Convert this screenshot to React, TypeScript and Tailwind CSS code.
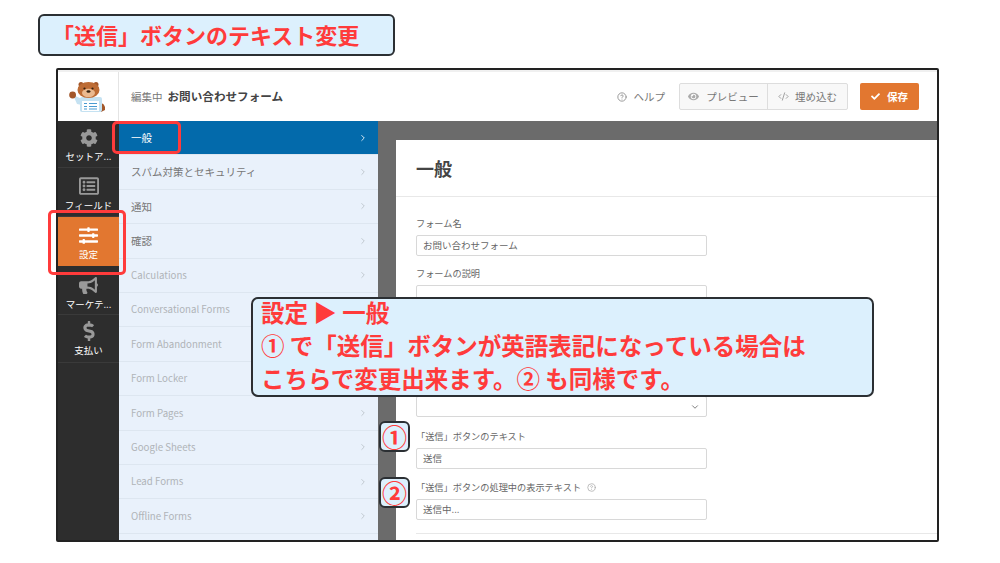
import { ChevronDown, ChevronRight, CircleHelp, CodeXml } from "lucide-react"
import { FaBullhorn, FaCheck, FaCog, FaDollarSign, FaEye, FaRegListAlt, FaSlidersH } from "react-icons/fa"
import type { ReactNode } from "react"

const font = "font-['Noto_Sans_CJK_JP','Noto_Sans',sans-serif]"

const navItems = [
  { label: "セットア...", icon: <FaCog className="size-[18px] text-[#999]" />, h: "h-[47px] pt-[3px]" },
  { label: "フィールド", icon: <FaRegListAlt className="size-[20px] text-[#999]" />, h: "h-[49px] pt-[3px]" },
  { label: "設定", icon: <FaSlidersH className="size-[19px] text-white" />, h: "h-[49px] pt-[3px]", active: true },
  { label: "マーケテ...", icon: <FaBullhorn className="size-[19px] text-[#999]" />, h: "h-[43px] mt-[6px]" },
  { label: "支払い", icon: <FaDollarSign className="size-[20px] text-[#999]" />, h: "h-[48px]" },
]

const subItems = [
  { label: "一般", active: true },
  { label: "スパム対策とセキュリティ", on: true },
  { label: "通知", on: true },
  { label: "確認", on: true },
  { label: "Calculations", latin: true },
  { label: "Conversational Forms", latin: true },
  { label: "Form Abandonment", latin: true },
  { label: "Form Locker", latin: true },
  { label: "Form Pages", latin: true },
  { label: "Google Sheets", latin: true },
  { label: "Lead Forms", latin: true },
  { label: "Offline Forms", latin: true },
]

const Bear = () => (
  <svg viewBox="0 0 38 30" className="h-[30px] w-[38px]">
    <circle cx="12" cy="2.5" r="2.5" fill="#a3572a" />
    <circle cx="27" cy="2.5" r="2.5" fill="#a3572a" />
    <path d="M29 20 q8 1 7 8 l-4 2 Z" fill="#a3572a" />
    <path d="M4 13 L13 17 L13 23 L8 22 Z" fill="#c5e2f2" />
    <rect x="11" y="15" width="22" height="15" rx="2" fill="#c5e2f2" />
    <ellipse cx="19.5" cy="8" rx="11" ry="8" fill="#bd6c35" />
    <ellipse cx="19.5" cy="11" rx="6.5" ry="4.2" fill="#eab98f" />
    <circle cx="15.5" cy="6.5" r="1.1" fill="#33200f" />
    <circle cx="23.5" cy="6.5" r="1.1" fill="#33200f" />
    <ellipse cx="19.5" cy="9.5" rx="2" ry="1.2" fill="#33200f" />
    <circle cx="3.6" cy="13" r="3.4" fill="#a3572a" />
    <rect x="13" y="19" width="17" height="10" fill="#fff" />
    <path d="M15 21.5h3M20 21.5h8M15 24.5h3M20 24.5h8M15 27h3M20 27h8" stroke="#4a9bd1" strokeWidth="1.2" />
  </svg>
)

const Field = ({ label, value, help }: { label: string; value: string; help?: boolean }) => (
  <div className="flex flex-col">
    <div className="flex h-[15px] items-center gap-[6px] text-[9.2px] leading-none text-[#666]">
      {label}
      {help && <CircleHelp className="size-[9px] text-[#aaa]" />}
    </div>
    <div className="mt-[4px] flex h-[21px] w-[291px] items-center rounded-[2px] border border-[#d8d8d8] bg-white px-[6px] text-[9.5px] text-[#666]">
      {value}
    </div>
  </div>
)

const Badge = ({ top, children }: { top: string; children: ReactNode }) => (
  <div className={`absolute left-[379px] ${top} flex h-[31px] w-[31px] items-center justify-center rounded-[6px] border-2 border-[#2b2f33] bg-[#dcf0fd] text-[25px] font-bold leading-none text-[#ff3b3b]`}>
    {children}
  </div>
)

export default function App() {
  return (
    <div className={`relative h-[563px] w-[1000px] overflow-hidden bg-white ${font}`}>
      <div className="ml-[38px] mt-[14px] flex h-[42px] w-[357px] items-center rounded-[6px] border-2 border-[#2b2f33] bg-[#dcf0fd] pb-[3px] pl-[12px] text-[22px] font-bold leading-none text-[#ff3b3b]">
        「送信」ボタンのテキスト変更
      </div>

      <div className="ml-[56px] mt-[12px] flex h-[474px] w-[883px] flex-col overflow-hidden rounded-[2px] border-2 border-[#222]">
        <header className="flex h-[51px] shrink-0 items-stretch border-t-2 border-[#f0f0f0] bg-white">
          <div className="flex w-[61px] shrink-0 items-center justify-center border-r border-[#e4e4e4]">
            <Bear />
          </div>
          <div className="flex flex-1 items-center pl-[12px] pr-[18px] text-[10.5px]">
            <span className="text-[#777]">編集中</span>
            <span className="ml-[5px] text-[11.6px] font-bold text-[#444]">お問い合わせフォーム</span>
            <div className="ml-auto flex items-center">
              <CircleHelp className="size-[10px] text-[#888]" />
              <span className="ml-[7px] text-[#777]">ヘルプ</span>
              <div className="ml-[14px] flex h-[27px] items-stretch rounded-[2px] border border-[#ddd] bg-[#f8f8f8] text-[#777]">
                <div className="flex w-[88px] items-center justify-center gap-[7px] border-r border-[#ddd]">
                  <FaEye className="size-[11px] text-[#aaa]" />
                  プレビュー
                </div>
                <div className="flex w-[79px] items-center justify-center gap-[6px]">
                  <CodeXml className="size-[11px] text-[#999]" />
                  埋め込む
                </div>
              </div>
              <div className="ml-[12px] flex h-[27px] w-[59px] items-center justify-center gap-[7px] rounded-[2px] bg-[#e27730] font-bold text-white">
                <FaCheck className="size-[9px]" />
                保存
              </div>
            </div>
          </div>
        </header>

        <div className="flex min-h-0 flex-1">
          <nav className="w-[61px] shrink-0 bg-[#2d2d2d]">
            {navItems.map((n) => (
              <div
                key={n.label}
                className={`flex ${n.h} flex-col items-center justify-center gap-[3px] border-b border-[#3a3a3a] ${n.active ? "border-b-0 bg-[#e27730]" : ""}`}
              >
                {n.icon}
                <span className="whitespace-nowrap text-[9.5px] leading-[13px] text-white">{n.label}</span>
              </div>
            ))}
          </nav>

          <div className="flex w-[259px] shrink-0 flex-col bg-[#e9f1fb]">
            {subItems.map((s) => (
              <div
                key={s.label}
                className={`flex h-[34.4px] shrink-0 items-center justify-between border-b border-[#dde6f0] pl-[12px] pr-[10px] ${s.latin ? "text-[9.7px]" : "text-[10.5px]"} ${
                  s.active ? "bg-[#036aab] text-white" : s.on ? "text-[#777]" : "text-[#b0b4b8]"
                }`}
              >
                {s.label}
                <ChevronRight className={`size-[10px] ${s.active ? "text-white" : "text-[#b8c0c8]"}`} />
              </div>
            ))}
          </div>

          <div className="min-w-0 flex-1 bg-[#6b6b6b] pl-[18px] pt-[19px]">
            <div className="h-full bg-white">
              <div className="flex h-[57px] items-center border-b border-[#e8e8e8] pl-[20px] text-[18px] font-bold text-[#444]">
                一般
              </div>
              <div className="flex flex-col pl-[20px] pt-[19px]">
                <Field label="フォーム名" value="お問い合わせフォーム" />
                <div className="mt-[10px]">
                  <Field label="フォームの説明" value="" />
                </div>
                <div className="mt-[90px] flex h-[21px] w-[291px] items-center justify-end rounded-[2px] border border-[#d8d8d8] pr-[6px]">
                  <ChevronDown className="size-[10px] text-[#666]" />
                </div>
                <div className="mt-[12px]">
                  <Field label="「送信」ボタンのテキスト" value="送信" />
                </div>
                <div className="mt-[11px]">
                  <Field label="「送信」ボタンの処理中の表示テキスト" value="送信中..." help />
                </div>
                <div className="mt-[13px] h-px bg-[#e8e8e8]" />
              </div>
            </div>
          </div>
        </div>
      </div>

      {/* 赤枠 */}
      <div className="absolute left-[48px] top-[210px] h-[65px] w-[78px] rounded-[5px] border-[3px] border-[#ff3b3b]" />
      <div className="absolute left-[112px] top-[121px] h-[33px] w-[69px] rounded-[5px] border-[3px] border-[#ff3b3b]" />

      {/* 説明 */}
      <div className="absolute left-[251px] top-[297px] flex h-[100px] w-[623px] flex-col justify-center rounded-[7px] border-2 border-[#2b2f33] bg-[#dcf0fd] pb-[4px] pl-[8px] text-[23.5px] font-bold leading-[33px] text-[#ff3b3b]">
        <div>設定 ▶ 一般</div>
        <div>① で「送信」ボタンが英語表記になっている場合は</div>
        <div>こちらで変更出来ます。② も同様です。</div>
      </div>

      <Badge top="top-[421px]">①</Badge>
      <Badge top="top-[477px]">②</Badge>
    </div>
  )
}
